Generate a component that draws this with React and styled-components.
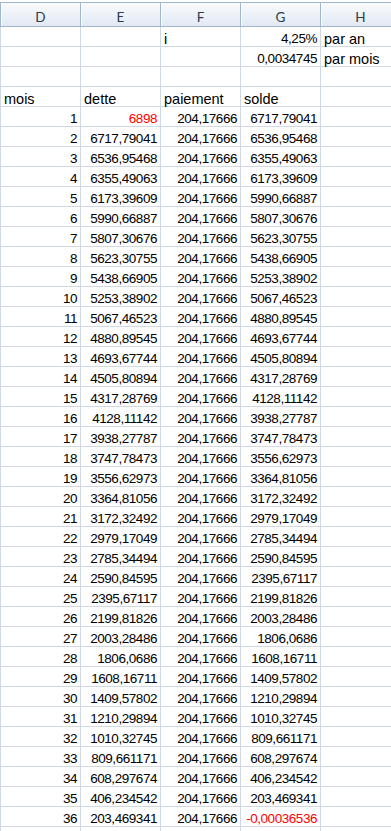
import React from 'react';
import styled, { createGlobalStyle } from 'styled-components';

const Global = createGlobalStyle`
  html, body { margin: 0; padding: 0; background: #ffffff; overflow: hidden; }
  body { width: 391px; height: 831px; }
`;

const Sheet = styled.div`
  display: grid;
  grid-template-columns: 81px repeat(4, 80px);
  grid-template-rows: 25px;
  grid-auto-rows: 20px;
  padding-top: 2px;
  width: max-content;
  font-family: "Liberation Sans", Arial, sans-serif;
`;

const HeaderCell = styled.div`
  box-sizing: border-box;
  display: flex;
  align-items: flex-end;
  justify-content: center;
  padding-bottom: 2px;
  border-top: 1px solid #9eb6ce;
  border-bottom: 1px solid #9eb6ce;
  border-right: 1px solid #9eb6ce;
  border-left: ${p => (p.$first ? '1px solid #9eb6ce' : 'none')};
  box-shadow: inset 1px 0 0 #ffffff;
  background: linear-gradient(to bottom, #f9fbfd 0%, #eef3f9 45%, #e2e9f3 100%);
  color: #2f3a48;
  font-family: Lato, "Open Sans", sans-serif;
  font-size: 13.5px;
  line-height: 13px;
`;

const Cell = styled.div`
  box-sizing: border-box;
  display: flex;
  align-items: flex-end;
  justify-content: ${p => (p.$right ? 'flex-end' : 'flex-start')};
  padding: 0 ${p => (p.$right ? '3px' : '2px')} 0 3px;
  border-right: 1px solid #d0d7e5;
  border-bottom: 1px solid #d0d7e5;
  border-left: ${p => (p.$first ? '1px solid #d0d7e5' : 'none')};
  color: ${p => (p.$red ? '#ff0000' : '#000000')};
  font-size: ${p => (p.$right ? '13.5px' : '14.5px')};
  letter-spacing: ${p => (p.$right ? '-0.45px' : '0')};
  line-height: 14.5px;
  white-space: nowrap;
  overflow: visible;
`;

const cols = ['D', 'E', 'F', 'G', 'H'];

const debts = [
  '6898', '6717,79041', '6536,95468', '6355,49063', '6173,39609', '5990,66887',
  '5807,30676', '5623,30755', '5438,66905', '5253,38902', '5067,46523', '4880,89545',
  '4693,67744', '4505,80894', '4317,28769', '4128,11142', '3938,27787', '3747,78473',
  '3556,62973', '3364,81056', '3172,32492', '2979,17049', '2785,34494', '2590,84595',
  '2395,67117', '2199,81826', '2003,28486', '1806,0686', '1608,16711', '1409,57802',
  '1210,29894', '1010,32745', '809,661171', '608,297674', '406,234542', '203,469341',
];
const soldes = [...debts.slice(1), '-0,00036536'];

const topRows = [
  [null, null, { t: 'i' }, { t: '4,25%', r: true }, { t: 'par an' }],
  [null, null, null, { t: '0,0034745', r: true }, { t: 'par mois' }],
  [null, null, null, null, null],
  [{ t: 'mois' }, { t: 'dette' }, { t: 'paiement' }, { t: 'solde' }, null],
];

const dataRows = debts.map((d, i) => [
  { t: String(i + 1), r: true },
  { t: d, r: true, red: i === 0 },
  { t: '204,17666', r: true },
  { t: soldes[i], r: true, red: i === debts.length - 1 },
  null,
]);

const allRows = [...topRows, ...dataRows, [null, null, null, null, null]];

export default function App() {
  return (
    <>
      <Global />
      <Sheet>
        {cols.map((c, i) => (
          <HeaderCell key={c} $first={i === 0}>{c}</HeaderCell>
        ))}
        {allRows.map((row, ri) =>
          row.map((cell, ci) => (
            <Cell
              key={`${ri}-${ci}`}
              $first={ci === 0}
              $right={cell?.r}
              $red={cell?.red}
            >
              {cell ? cell.t : ''}
            </Cell>
          ))
        )}
      </Sheet>
    </>
  );
}
